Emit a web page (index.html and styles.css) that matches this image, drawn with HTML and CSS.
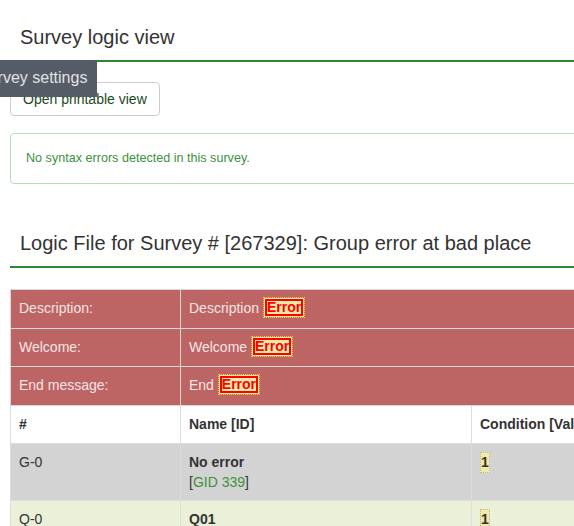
FILE: index.html
```html
<!DOCTYPE html>
<html>
<head>
<meta charset="utf-8">
<title>Survey logic view</title>
<link rel="stylesheet" href="styles.css">
</head>
<body>
<div class="page">
  <h1 class="page-title">Survey logic view</h1>
  <div class="tooltip">Survey settings</div>
  <div class="actions"><button class="btn">Open printable view</button></div>
  <div class="alert">No syntax errors detected in this survey.</div>
  <h2 class="page-title section-title">Logic File for Survey # [267329]: Group error at bad place</h2>
  <table class="logic">
    <colgroup>
      <col class="c1"><col class="c2"><col class="c3"><col class="c4">
    </colgroup>
    <tr class="err-row">
      <td>Description:</td>
      <td colspan="3">Description <span class="em"><span class="em-error">Error</span></span></td>
    </tr>
    <tr class="err-row">
      <td>Welcome:</td>
      <td colspan="3">Welcome <span class="em"><span class="em-error">Error</span></span></td>
    </tr>
    <tr class="err-row">
      <td>End message:</td>
      <td colspan="3">End <span class="em"><span class="em-error">Error</span></span></td>
    </tr>
    <tr class="head-row">
      <th>#</th>
      <th>Name [ID]</th>
      <th>Condition [Validation] (Default value)</th>
      <th>Text [Help] (Tip)</th>
    </tr>
    <tr class="group-row">
      <td>G-0</td>
      <td><b>No error</b><br>[<span class="link">GID 339</span>]</td>
      <td><span class="expr">1</span></td>
      <td></td>
    </tr>
    <tr class="question-row">
      <td>Q-0</td>
      <td><b>Q01</b><br>[<span class="link">QID 1</span>]</td>
      <td><span class="expr">1</span></td>
      <td></td>
    </tr>
  </table>
</div>
</body>
</html>
```
FILE: styles.css
```css
html, body {
  margin: 0;
  padding: 0;
  background: #fff;
  overflow: hidden;
}
body {
  font-family: "Liberation Sans", Arial, sans-serif;
  font-size: 14px;
  line-height: 20px;
  color: #333;
}
.page {
  position: relative;
  width: 900px;
  padding-left: 10px;
  padding-top: 1px;
}
.page-title {
  margin: 25px 0 0 0;
  padding: 0 0 12px 10px;
  font-size: 20px;
  line-height: 22px;
  font-weight: normal;
  color: #333;
  border-bottom: 2px solid #328535;
}
.section-title {
  margin-top: 48px;
}
.tooltip {
  position: absolute;
  left: -32px;
  top: 60px;
  background: #555c68;
  color: #e2e2e2;
  font-size: 16px;
  line-height: 23px;
  padding: 6px 10px 8px 10px;
  white-space: nowrap;
}
.actions {
  margin-top: 20px;
}
.btn {
  font-family: "Liberation Sans", Arial, sans-serif;
  font-size: 14px;
  line-height: 20px;
  color: #1b4a1b;
  background: #fff;
  border: 1px solid #ccc;
  border-radius: 4px;
  padding: 6px 12px;
  margin: 0;
}
.alert {
  margin-top: 17px;
  border: 1px solid #b7dcb7;
  border-radius: 4px;
  padding: 15px;
  font-size: 12.6px;
  line-height: 19px;
  color: #3b923b;
}
.logic {
  margin-top: 21px;
  border-collapse: collapse;
  width: 890px;
  table-layout: fixed;
  border: 1px solid #ddd;
}
.c1 { width: 170px; }
.c2 { width: 291px; }
.c3 { width: 200px; }
.logic td, .logic th {
  border: 1px solid #ddd;
  padding: 8px;
  text-align: left;
  vertical-align: top;
}
.logic th {
  font-weight: bold;
  white-space: nowrap;
  overflow: hidden;
  padding-bottom: 9px;
}
.err-row td {
  background: #bd6565;
  color: #f6e4e4;
  border-color: #d8d8d8;
  padding-top: 8px;
  padding-bottom: 9.5px;
}
.head-row th {
  background: #fff;
}
.group-row td {
  background: #d3d3d3;
}
.question-row td {
  background: #eaf1d8;
}
.em {
  display: inline-block;
  vertical-align: top;
  margin-top: -1px;
  background: #f1e9a8;
  border: 1px dotted #f0d020;
  background-clip: padding-box;
  padding: 1px;
  line-height: 13px;
}
.em-error {
  display: inline-block;
  vertical-align: top;
  border: 2px solid #f00;
  color: #f00;
  font-weight: bold;
  line-height: 13px;
}
.expr {
  display: inline-block;
  vertical-align: top;
  background: #f1e9a8;
  border: 1px dotted #b8b8a0;
  font-weight: bold;
  line-height: 19px;
  color: #333;
}
.link {
  color: #3b923b;
}
```
